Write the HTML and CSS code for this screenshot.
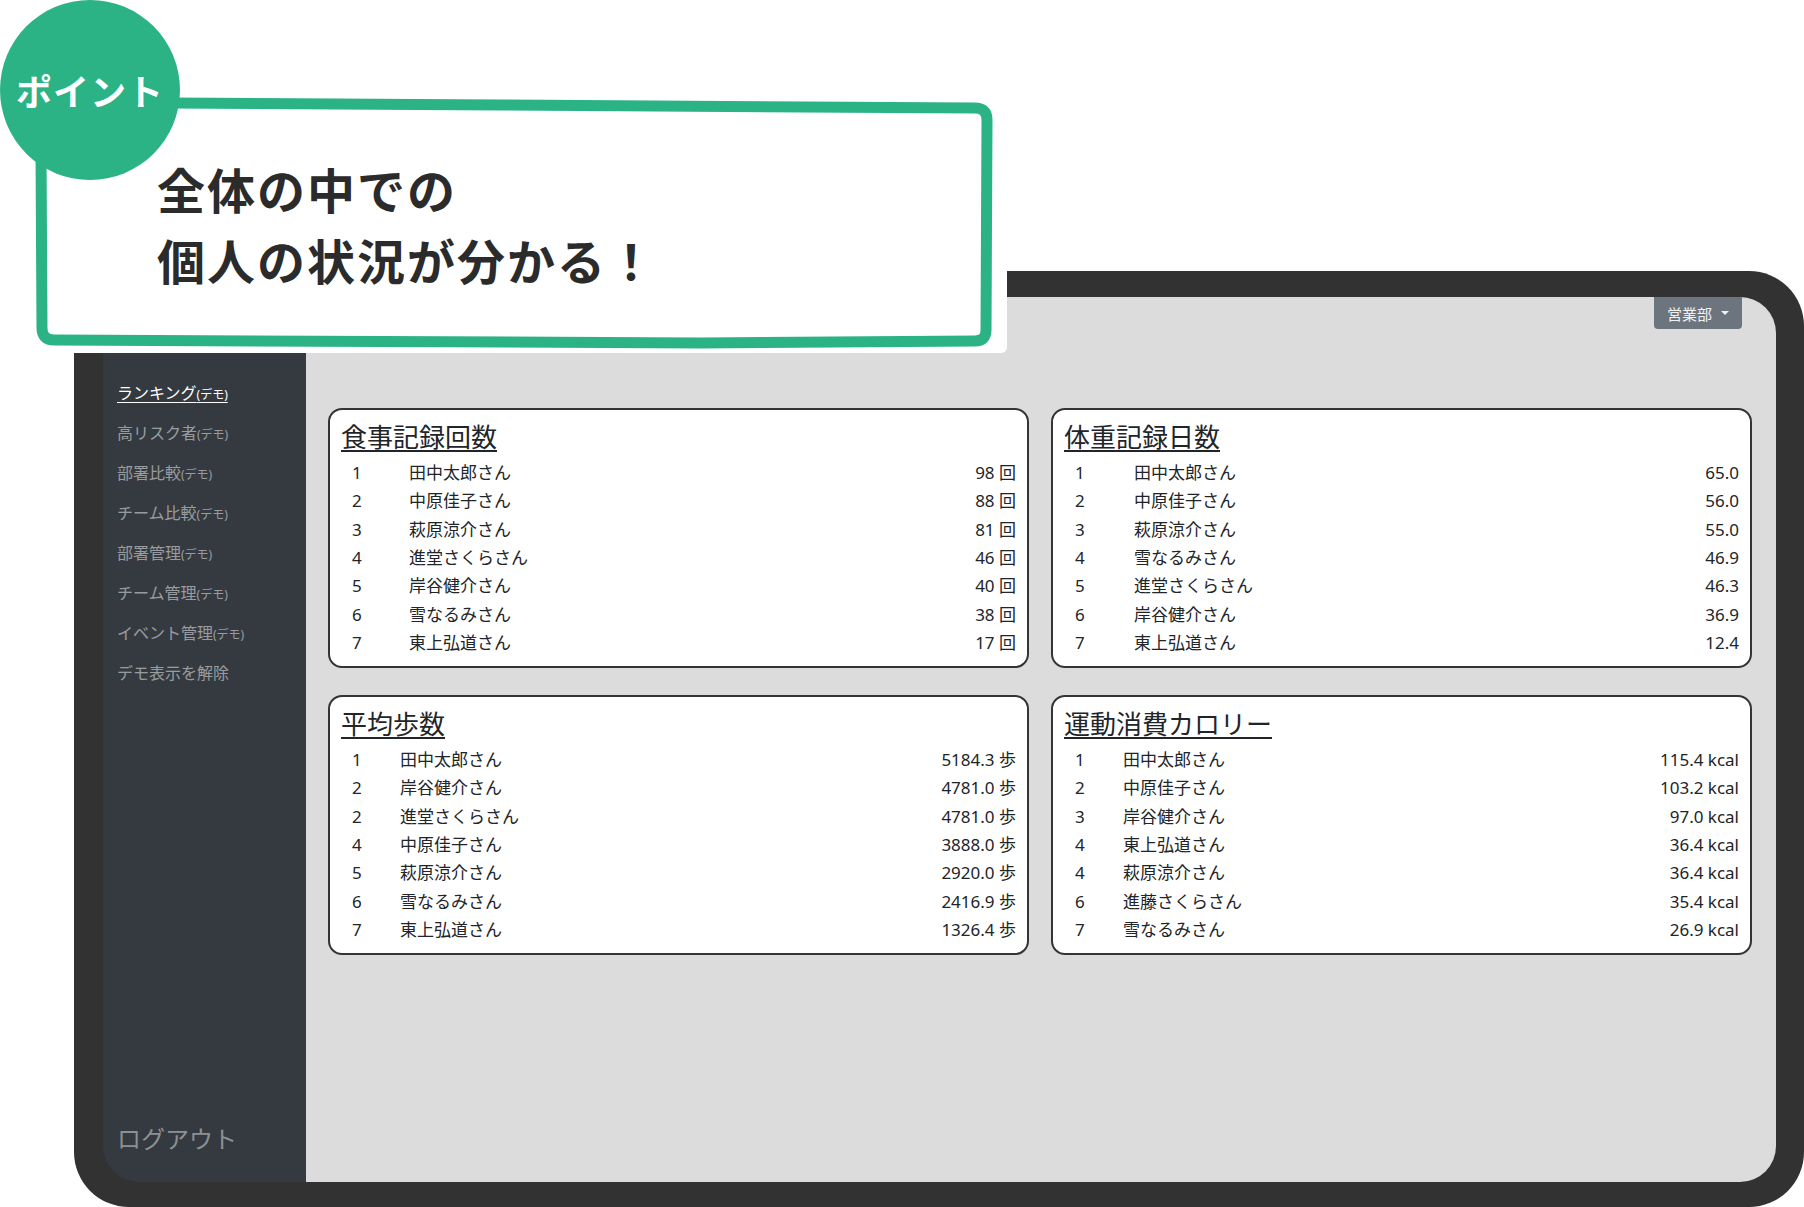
FILE: index.html
```html
<!DOCTYPE html>
<html lang="ja">
<head>
    <meta charset="UTF-8">
    <meta name="viewport" content="width=device-width, initial-scale=1.0">
    <title>ランキング(デモ)</title>
    <link rel="stylesheet" href="styles.css">
</head>
<body>
<div class="stage">
    <!-- device mockup -->
    <div class="device">
        <div class="screen">
            <aside class="sidebar">
                <nav class="side-nav">
                    <a class="side-link active" href="#">ランキング<small>(デモ)</small></a>
                    <a class="side-link" href="#">高リスク者<small>(デモ)</small></a>
                    <a class="side-link" href="#">部署比較<small>(デモ)</small></a>
                    <a class="side-link" href="#">チーム比較<small>(デモ)</small></a>
                    <a class="side-link" href="#">部署管理<small>(デモ)</small></a>
                    <a class="side-link" href="#">チーム管理<small>(デモ)</small></a>
                    <a class="side-link" href="#">イベント管理<small>(デモ)</small></a>
                    <a class="side-link" href="#">デモ表示を解除</a>
                </nav>
                <a class="logout" href="#">ログアウト</a>
            </aside>

            <main class="content">
                <div class="toolbar">
                    <button class="dept-btn" type="button">営業部<span class="caret"></span></button>
                </div>

                <div class="rank-grid">
                    <section class="rank-card">
                        <h2 class="rank-title">食事記録回数</h2>
                        <div class="rank-list cols-a">
                            <div class="rank-row"><span>1</span><span>田中太郎さん</span><span>98 回</span></div>
                            <div class="rank-row"><span>2</span><span>中原佳子さん</span><span>88 回</span></div>
                            <div class="rank-row"><span>3</span><span>萩原涼介さん</span><span>81 回</span></div>
                            <div class="rank-row"><span>4</span><span>進堂さくらさん</span><span>46 回</span></div>
                            <div class="rank-row"><span>5</span><span>岸谷健介さん</span><span>40 回</span></div>
                            <div class="rank-row"><span>6</span><span>雪なるみさん</span><span>38 回</span></div>
                            <div class="rank-row"><span>7</span><span>東上弘道さん</span><span>17 回</span></div>
                        </div>
                    </section>

                    <section class="rank-card">
                        <h2 class="rank-title">体重記録日数</h2>
                        <div class="rank-list cols-b">
                            <div class="rank-row"><span>1</span><span>田中太郎さん</span><span>65.0</span></div>
                            <div class="rank-row"><span>2</span><span>中原佳子さん</span><span>56.0</span></div>
                            <div class="rank-row"><span>3</span><span>萩原涼介さん</span><span>55.0</span></div>
                            <div class="rank-row"><span>4</span><span>雪なるみさん</span><span>46.9</span></div>
                            <div class="rank-row"><span>5</span><span>進堂さくらさん</span><span>46.3</span></div>
                            <div class="rank-row"><span>6</span><span>岸谷健介さん</span><span>36.9</span></div>
                            <div class="rank-row"><span>7</span><span>東上弘道さん</span><span>12.4</span></div>
                        </div>
                    </section>

                    <section class="rank-card">
                        <h2 class="rank-title">平均歩数</h2>
                        <div class="rank-list cols-c">
                            <div class="rank-row"><span>1</span><span>田中太郎さん</span><span>5184.3 歩</span></div>
                            <div class="rank-row"><span>2</span><span>岸谷健介さん</span><span>4781.0 歩</span></div>
                            <div class="rank-row"><span>2</span><span>進堂さくらさん</span><span>4781.0 歩</span></div>
                            <div class="rank-row"><span>4</span><span>中原佳子さん</span><span>3888.0 歩</span></div>
                            <div class="rank-row"><span>5</span><span>萩原涼介さん</span><span>2920.0 歩</span></div>
                            <div class="rank-row"><span>6</span><span>雪なるみさん</span><span>2416.9 歩</span></div>
                            <div class="rank-row"><span>7</span><span>東上弘道さん</span><span>1326.4 歩</span></div>
                        </div>
                    </section>

                    <section class="rank-card">
                        <h2 class="rank-title">運動消費カロリー</h2>
                        <div class="rank-list cols-c">
                            <div class="rank-row"><span>1</span><span>田中太郎さん</span><span>115.4 kcal</span></div>
                            <div class="rank-row"><span>2</span><span>中原佳子さん</span><span>103.2 kcal</span></div>
                            <div class="rank-row"><span>3</span><span>岸谷健介さん</span><span>97.0 kcal</span></div>
                            <div class="rank-row"><span>4</span><span>東上弘道さん</span><span>36.4 kcal</span></div>
                            <div class="rank-row"><span>4</span><span>萩原涼介さん</span><span>36.4 kcal</span></div>
                            <div class="rank-row"><span>6</span><span>進藤さくらさん</span><span>35.4 kcal</span></div>
                            <div class="rank-row"><span>7</span><span>雪なるみさん</span><span>26.9 kcal</span></div>
                        </div>
                    </section>
                </div>
            </main>
        </div>
    </div>

    <!-- point callout, sits over the device corner -->
    <div class="callout">
        <svg class="callout-frame" width="1007" height="353" viewBox="0 0 1007 353">
            <path d="M41 150 C41 220 42 290 42 328 Q42 340 54 340 L700 343 L975 341 Q986 341 986 330 L987 120 Q987 108 975 108 L500 105 L170 103"
                  fill="none" stroke="#2bb385" stroke-width="11" stroke-linecap="round" stroke-linejoin="round"/>
        </svg>
        <div class="badge">ポイント</div>
        <p class="callout-text">全体の中での<br>個人の状況が分かる！</p>
    </div>
</div>
</body>
</html>
```

FILE: styles.css
```css
body {
    margin: 0;
    background-color: #fff;
    font-family: "Noto Sans", "Noto Sans CJK JP", sans-serif;
    color: #212529;
    overflow: hidden;
}
.stage {
    position: relative;
    width: 1804px;
    height: 1207px;
    padding: 271px 0 0 74px;
    box-sizing: border-box;
}

/* device frame */
.device {
    width: 1730px;
    height: 936px;
    padding: 26px 28px 25px 29px;
    box-sizing: border-box;
    background-color: #323232;
    border-radius: 55px;
}
.screen {
    display: flex;
    height: 100%;
    border-radius: 36px;
    overflow: hidden;
}

/* sidebar */
.sidebar {
    width: 203px;
    flex-shrink: 0;
    background-color: #343a40;
    display: flex;
    flex-direction: column;
    padding: 76px 0 27px 14px;
    box-sizing: border-box;
}
.side-nav {
    display: flex;
    flex-direction: column;
}
.side-link {
    display: block;
    height: 40px;
    font-size: 16px;
    line-height: 40px;
    color: rgba(255, 255, 255, 0.5);
    text-decoration: none;
    white-space: nowrap;
}
.side-link small {
    font-size: 12px;
    line-height: 1;
}
.side-link.active {
    color: #fff;
    text-decoration: underline;
    text-underline-offset: 3px;
}
.logout {
    margin-top: auto;
    font-size: 24px;
    line-height: 32px;
    color: rgba(255, 255, 255, 0.45);
    text-decoration: none;
}

/* main area */
.content {
    flex: 1;
    background-color: #dcdcdc;
    padding: 0 24px 0 22px;
}
.toolbar {
    display: flex;
    justify-content: flex-end;
    padding-right: 10px;
}
.dept-btn {
    display: flex;
    align-items: center;
    height: 32px;
    padding: 0 13px;
    border: none;
    border-radius: 0 0 4px 4px;
    background-color: #6c757d;
    color: #f1f1f1;
    font-family: inherit;
    font-size: 15px;
}
.caret {
    margin-left: 9px;
    border-top: 4px solid #f1f1f1;
    border-left: 4px solid transparent;
    border-right: 4px solid transparent;
}

.rank-grid {
    display: grid;
    grid-template-columns: 1fr 1fr;
    column-gap: 22px;
    row-gap: 27px;
    margin-top: 79px;
}
.rank-card {
    height: 260px;
    box-sizing: border-box;
    background-color: #fff;
    border: 2px solid #343434;
    border-radius: 14px;
    padding: 11px 11px 9px 11px;
}
.rank-title {
    margin: 0;
    font-size: 26px;
    line-height: 32px;
    font-weight: 400;
    color: #212529;
    text-decoration: underline;
    text-decoration-thickness: 2px;
    text-underline-offset: 3px;
}
.rank-list {
    margin-top: 6px;
    padding-left: 11px;
}
.rank-row {
    display: grid;
    grid-template-columns: var(--num-col) 1fr auto;
    height: 28.33px;
    line-height: 28.33px;
    font-size: 17px;
    white-space: nowrap;
}
.rank-row span:last-child {
    text-align: right;
}
.cols-a { --num-col: 57px; }
.cols-b { --num-col: 59px; }
.cols-c { --num-col: 48px; }

/* callout */
.callout {
    position: absolute;
    left: 0;
    top: 0;
    width: 1007px;
    height: 353px;
    background-color: #fff;
    border-bottom-right-radius: 6px;
    padding: 155px 0 0 157px;
    box-sizing: border-box;
}
.callout-frame {
    position: absolute;
    left: 0;
    top: 0;
}
.badge {
    position: absolute;
    left: 0;
    top: 0;
    width: 180px;
    height: 180px;
    border-radius: 50%;
    background-color: #2bb385;
    color: #fff;
    font-size: 36px;
    font-weight: 700;
    letter-spacing: 1px;
    display: flex;
    align-items: center;
    justify-content: center;
}
.callout-text {
    position: relative;
    margin: 0;
    font-size: 48px;
    line-height: 71px;
    font-weight: 700;
    letter-spacing: 2px;
    color: #2b2b2b;
}
```
